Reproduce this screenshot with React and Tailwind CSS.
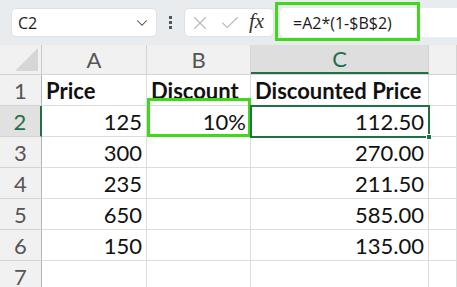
import { ChevronDown, X, Check } from 'lucide-react'

const COLS = [
  { key: 'A', w: 'w-[105px]' },
  { key: 'B', w: 'w-[104px]' },
  { key: 'C', w: 'w-[178px]' },
  { key: 'D', w: 'flex-1' },
]

const ROWS = [
  ['Price', 'Discount', 'Discounted Price'],
  ['125', '10%', '112.50'],
  ['300', '', '270.00'],
  ['235', '', '211.50'],
  ['650', '', '585.00'],
  ['150', '', '135.00'],
  ['', '', ''],
]

export default function App() {
  return (
    <div className="relative w-[457px] h-[287px] overflow-hidden bg-white font-['Lato',sans-serif]">
      {/* Formula bar */}
      <div className="relative h-[45px] bg-[#e8ecef] flex items-center pl-[11px]">
        <div className="w-[146px] h-[29px] bg-white rounded-[5px] border border-[#dfe2e5] flex items-center justify-between pl-[6px] pr-[5px]">
          <span className="text-[16px] text-[#1b1b1b] font-['Open_Sans',sans-serif]">C2</span>
          <ChevronDown className="w-[18px] h-[18px] text-[#444]" strokeWidth={1.4} />
        </div>
        <div className="w-[27px] flex flex-col items-center gap-[2px]">
          <div className="w-[3px] h-[3px] bg-[#555]" />
          <div className="w-[3px] h-[3px] bg-[#555]" />
          <div className="w-[3px] h-[3px] bg-[#555]" />
        </div>
        <div className="w-[90px] h-[29px] bg-white rounded-[5px] border border-[#dfe2e5] flex items-center pl-[4px] gap-[8px]">
          <X className="w-[22px] h-[22px] text-[#b9b9b9]" strokeWidth={1.2} />
          <Check className="w-[22px] h-[22px] text-[#b9b9b9]" strokeWidth={1.2} />
          <span className="text-[21px] italic text-[#333] font-['Liberation_Serif',serif] leading-none -mt-[3px]">fx</span>
        </div>
        <div className="ml-[6px] flex-1 h-[29px] bg-white rounded-l-[5px] flex items-center pl-[13px]">
          <span className="text-[16px] text-[#1b1b1b] font-['Open_Sans',sans-serif]">=A2*(1-$B$2)</span>
        </div>
        {/* highlighted formula annotation */}
        <div className="absolute left-[275px] top-[2px] w-[145px] h-[39px] border-[3px] border-[#3fd81a]" />
      </div>

      {/* Column headers */}
      <div className="flex h-[30px] bg-[#f1f1f1] border-b border-[#d4d4d4]">
        <div className="w-[42px] border-r border-[#c8c8c8] flex items-end justify-end pr-[3px] pb-[3px]">
          <div className="w-0 h-0 border-l-[23px] border-l-transparent border-b-[23px] border-b-[#d6d6d6]" />
        </div>
        {COLS.map((c) => (
          <div
            key={c.key}
            className={`${c.w} flex items-center justify-center text-[22px] border-r border-[#d4d4d4] ${c.key === 'C' ? 'bg-[#dedede] text-[#1e7145] border-b-2 border-b-[#1e7145]' : 'text-[#555]'}`}
          >
            {c.key === 'D' ? '' : c.key}
          </div>
        ))}
      </div>

      {/* Rows */}
      {ROWS.map((row, ri) => {
        const active = ri === 1
        return (
          <div key={ri} className="flex h-[31px]">
            <div
              className={`w-[42px] flex items-center justify-center text-[22px] border-b border-[#d4d4d4] ${active ? 'bg-[#e1e1e1] text-[#1e7145] border-r-2 border-r-[#1e7145]' : 'bg-[#f1f1f1] text-[#555] border-r border-r-[#b5b5b5]'}`}
            >
              {ri + 1}
            </div>
            {COLS.map((c, ci) => {
              const v = row[ci] ?? ''
              const header = ri === 0
              return (
                <div
                  key={c.key}
                  className={`${c.w} flex items-center px-[4px] whitespace-nowrap overflow-hidden border-r border-b border-[#dcdcdc] text-[#111] ${header ? 'font-bold justify-start text-[22px]' : 'justify-end text-[22px]'}`}
                >
                  {v}
                </div>
              )
            })}
          </div>
        )
      })}

      {/* Annotation box around B2 */}
      <div className="absolute left-[147px] top-[98px] w-[104px] h-[39px] border-[3px] border-[#3fd81a]" />
      {/* Active cell C2 */}
      <div className="absolute left-[250px] top-[105px] w-[180px] h-[33px] border-2 border-[#1e7145]" />
      <div className="absolute left-[426px] top-[134px] w-[6px] h-[6px] bg-[#1e7145] border border-white" />
    </div>
  )
}
